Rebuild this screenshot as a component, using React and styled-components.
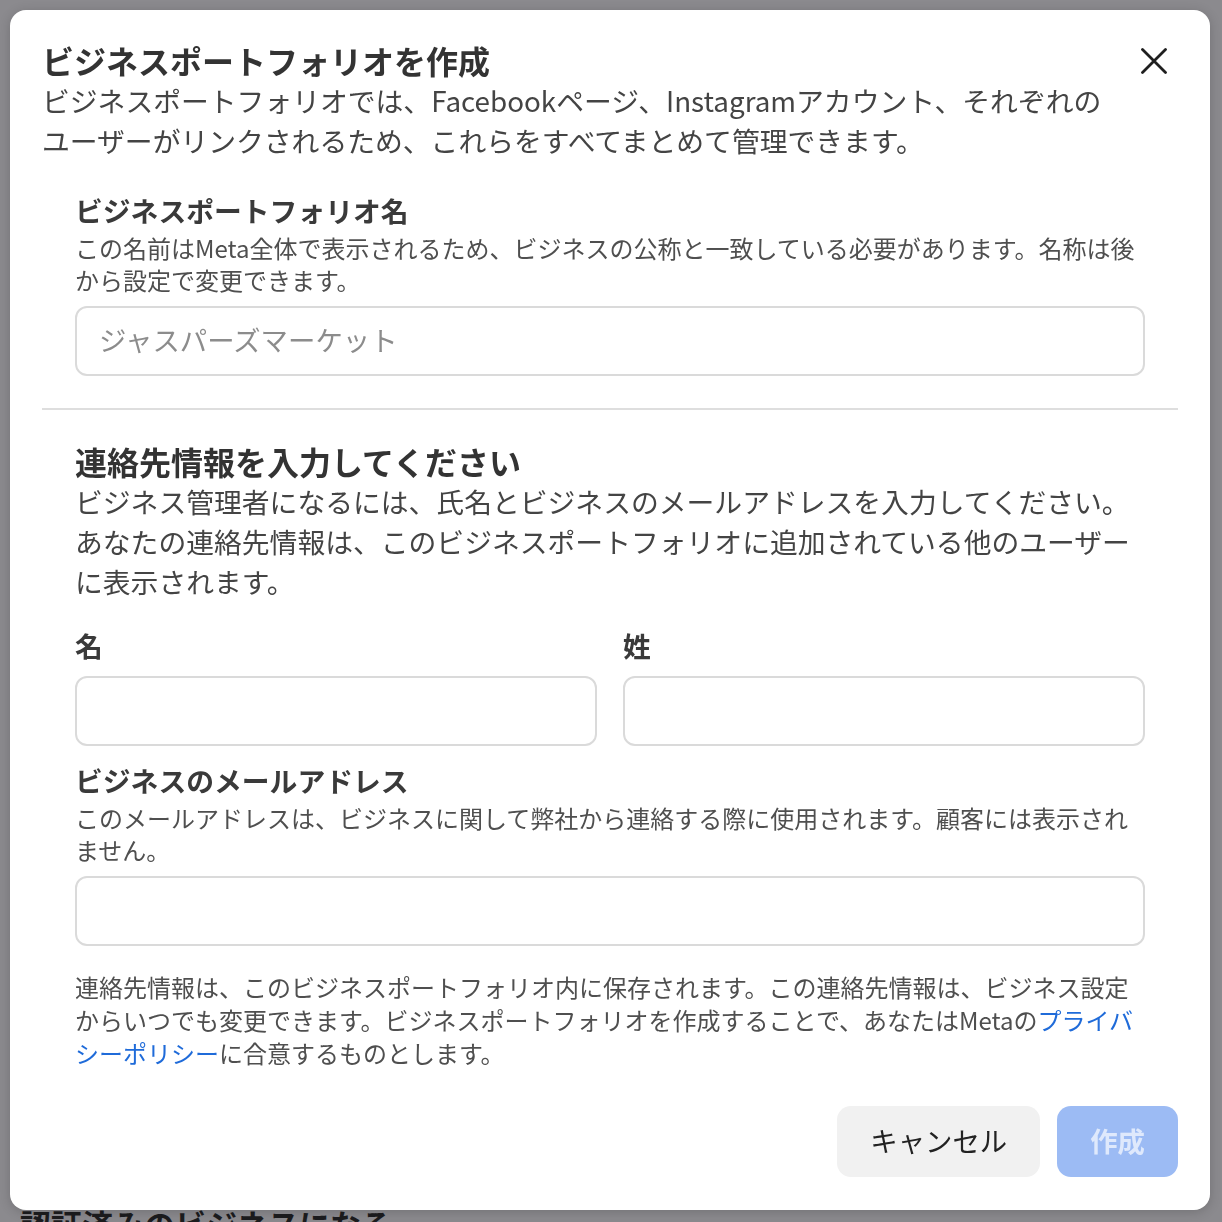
import React from 'react';
import styled, { createGlobalStyle } from 'styled-components';

const GlobalStyle = createGlobalStyle`
  html, body {
    margin: 0;
    padding: 0;
    background: #8b8a8e;
    font-family: "Noto Sans CJK JP", "Noto Sans", sans-serif;
    overflow: hidden;
  }
  * {
    box-sizing: border-box;
  }
`;

function CloseIcon() {
  return (
    <svg width="26" height="26" viewBox="0 0 26 26" fill="none">
      <path d="M1.5 1.5L24.5 24.5M24.5 1.5L1.5 24.5" stroke="#1f1f1f" strokeWidth="2.8" strokeLinecap="round" />
    </svg>
  );
}

function App() {
  return (
    <Page>
      <GlobalStyle />
      <BackdropHeading>認証済みのビジネスになる</BackdropHeading>
      <Modal>
        <Header>
          <HeaderText>
            <Title>ビジネスポートフォリオを作成</Title>
            <Subtitle>
              ビジネスポートフォリオでは、Facebookページ、Instagramアカウント、それぞれの<br />
              ユーザーがリンクされるため、これらをすべてまとめて管理できます。
            </Subtitle>
          </HeaderText>
          <CloseButton aria-label="閉じる">
            <CloseIcon />
          </CloseButton>
        </Header>

        <Section top={33}>
          <Label>ビジネスポートフォリオ名</Label>
          <Hint>
            この名前はMeta全体で表示されるため、ビジネスの公称と一致している必要があります。名称は後<br />
            から設定で変更できます。
          </Hint>
          <Input placeholder="ジャスパーズマーケット" top={10} />
        </Section>

        <Divider />

        <Section top={32}>
          <Heading>連絡先情報を入力してください</Heading>
          <Paragraph>
            ビジネス管理者になるには、氏名とビジネスのメールアドレスを入力してください。<br />
            あなたの連絡先情報は、このビジネスポートフォリオに追加されている他のユーザー<br />
            に表示されます。
          </Paragraph>

          <NameRow>
            <Field>
              <Label>名</Label>
              <Input top={12} />
            </Field>
            <Field>
              <Label>姓</Label>
              <Input top={12} />
            </Field>
          </NameRow>

          <Field top={17}>
            <Label>ビジネスのメールアドレス</Label>
            <Hint>
              このメールアドレスは、ビジネスに関して弊社から連絡する際に使用されます。顧客には表示され<br />
              ません。
            </Hint>
            <Input top={10} />
          </Field>

          <Notice>
            連絡先情報は、このビジネスポートフォリオ内に保存されます。この連絡先情報は、ビジネス設定<br />
            からいつでも変更できます。ビジネスポートフォリオを作成することで、あなたはMetaの<Link href="#">プライバ<br />
            シーポリシー</Link>に合意するものとします。
          </Notice>
        </Section>

        <Actions>
          <Button>キャンセル</Button>
          <Button primary disabled>作成</Button>
        </Actions>
      </Modal>
    </Page>
  );
}

const Page = styled.div`
  min-height: 100vh;
  padding: 1204px 0 0 20px;
`;

const BackdropHeading = styled.h2`
  margin: 0;
  font-size: 31px;
  line-height: 40px;
  font-weight: 700;
  color: #1c1c1e;
`;

const Modal = styled.div`
  position: fixed;
  top: 10px;
  left: 10px;
  width: 1200px;
  display: flex;
  flex-direction: column;
  padding: 31px 32px 33px;
  background: #ffffff;
  border-radius: 16px;
  box-shadow: 0 2px 12px rgba(0, 0, 0, 0.18);
`;

const Header = styled.div`
  display: flex;
  align-items: flex-start;
  gap: 8px;
`;

const HeaderText = styled.div`
  flex: 1;
  margin-top: -1px;
`;

const Title = styled.h1`
  margin: 0;
  font-size: 32px;
  line-height: 40px;
  font-weight: 700;
  color: #333333;
`;

const Subtitle = styled.p`
  margin: 0;
  font-size: 27.8px;
  line-height: 40px;
  color: #444444;
  white-space: nowrap;
`;

const CloseButton = styled.button`
  width: 48px;
  height: 40px;
  display: flex;
  align-items: center;
  justify-content: center;
  padding: 0;
  border: none;
  background: transparent;
  cursor: pointer;
`;

const Section = styled.div`
  display: flex;
  flex-direction: column;
  margin-top: ${props => props.top || 0}px;
  padding: 0 33px;
`;

const Label = styled.label`
  font-size: 27.8px;
  line-height: 36px;
  font-weight: 700;
  color: #3a3a3a;
  margin-top: -1px;
  margin-bottom: 1px;
`;

const Hint = styled.p`
  margin: 3px 0 0;
  font-size: 24px;
  line-height: 32px;
  color: #4f4f4f;
  white-space: nowrap;
`;

const Input = styled.input`
  width: 100%;
  height: 70px;
  margin-top: ${props => props.top || 0}px;
  padding: 0 22px 4px;
  border: 2px solid #dadada;
  border-radius: 12px;
  font-family: inherit;
  font-size: 27.4px;
  color: #333333;
  outline: none;

  &::placeholder {
    color: #8c8c8c;
  }
`;

const Divider = styled.hr`
  margin: 32px 0 0;
  border: none;
  border-top: 2px solid #dedede;
`;

const Heading = styled.h2`
  margin: -1px 0 1px;
  font-size: 32px;
  line-height: 40px;
  font-weight: 700;
  color: #333333;
`;

const Paragraph = styled.p`
  margin: -1px 0 1px;
  font-size: 27.8px;
  line-height: 40px;
  color: #444444;
  white-space: nowrap;
`;

const NameRow = styled.div`
  display: grid;
  grid-template-columns: 1fr 1fr;
  gap: 26px;
  margin-top: 26px;
`;

const Field = styled.div`
  display: flex;
  flex-direction: column;
  margin-top: ${props => props.top || 0}px;
`;

const Notice = styled.p`
  margin: 24px 0 0;
  font-size: 24px;
  line-height: 33px;
  color: #4f4f4f;
  white-space: nowrap;
`;

const Link = styled.a`
  color: #1f6bd9;
  text-decoration: none;
`;

const Actions = styled.div`
  display: flex;
  justify-content: flex-end;
  gap: 17px;
  margin-top: 37px;
`;

const Button = styled.button`
  height: 71px;
  padding: 0 33px 3px;
  border: none;
  border-radius: 14px;
  font-family: inherit;
  font-size: 27.4px;
  font-weight: ${props => props.primary ? 700 : 400};
  color: ${props => props.primary ? '#dfe9fc' : '#222222'};
  background: ${props => props.primary ? '#9cbbf4' : '#f1f1f1'};
  cursor: ${props => props.disabled ? 'default' : 'pointer'};
`;

export default App;
